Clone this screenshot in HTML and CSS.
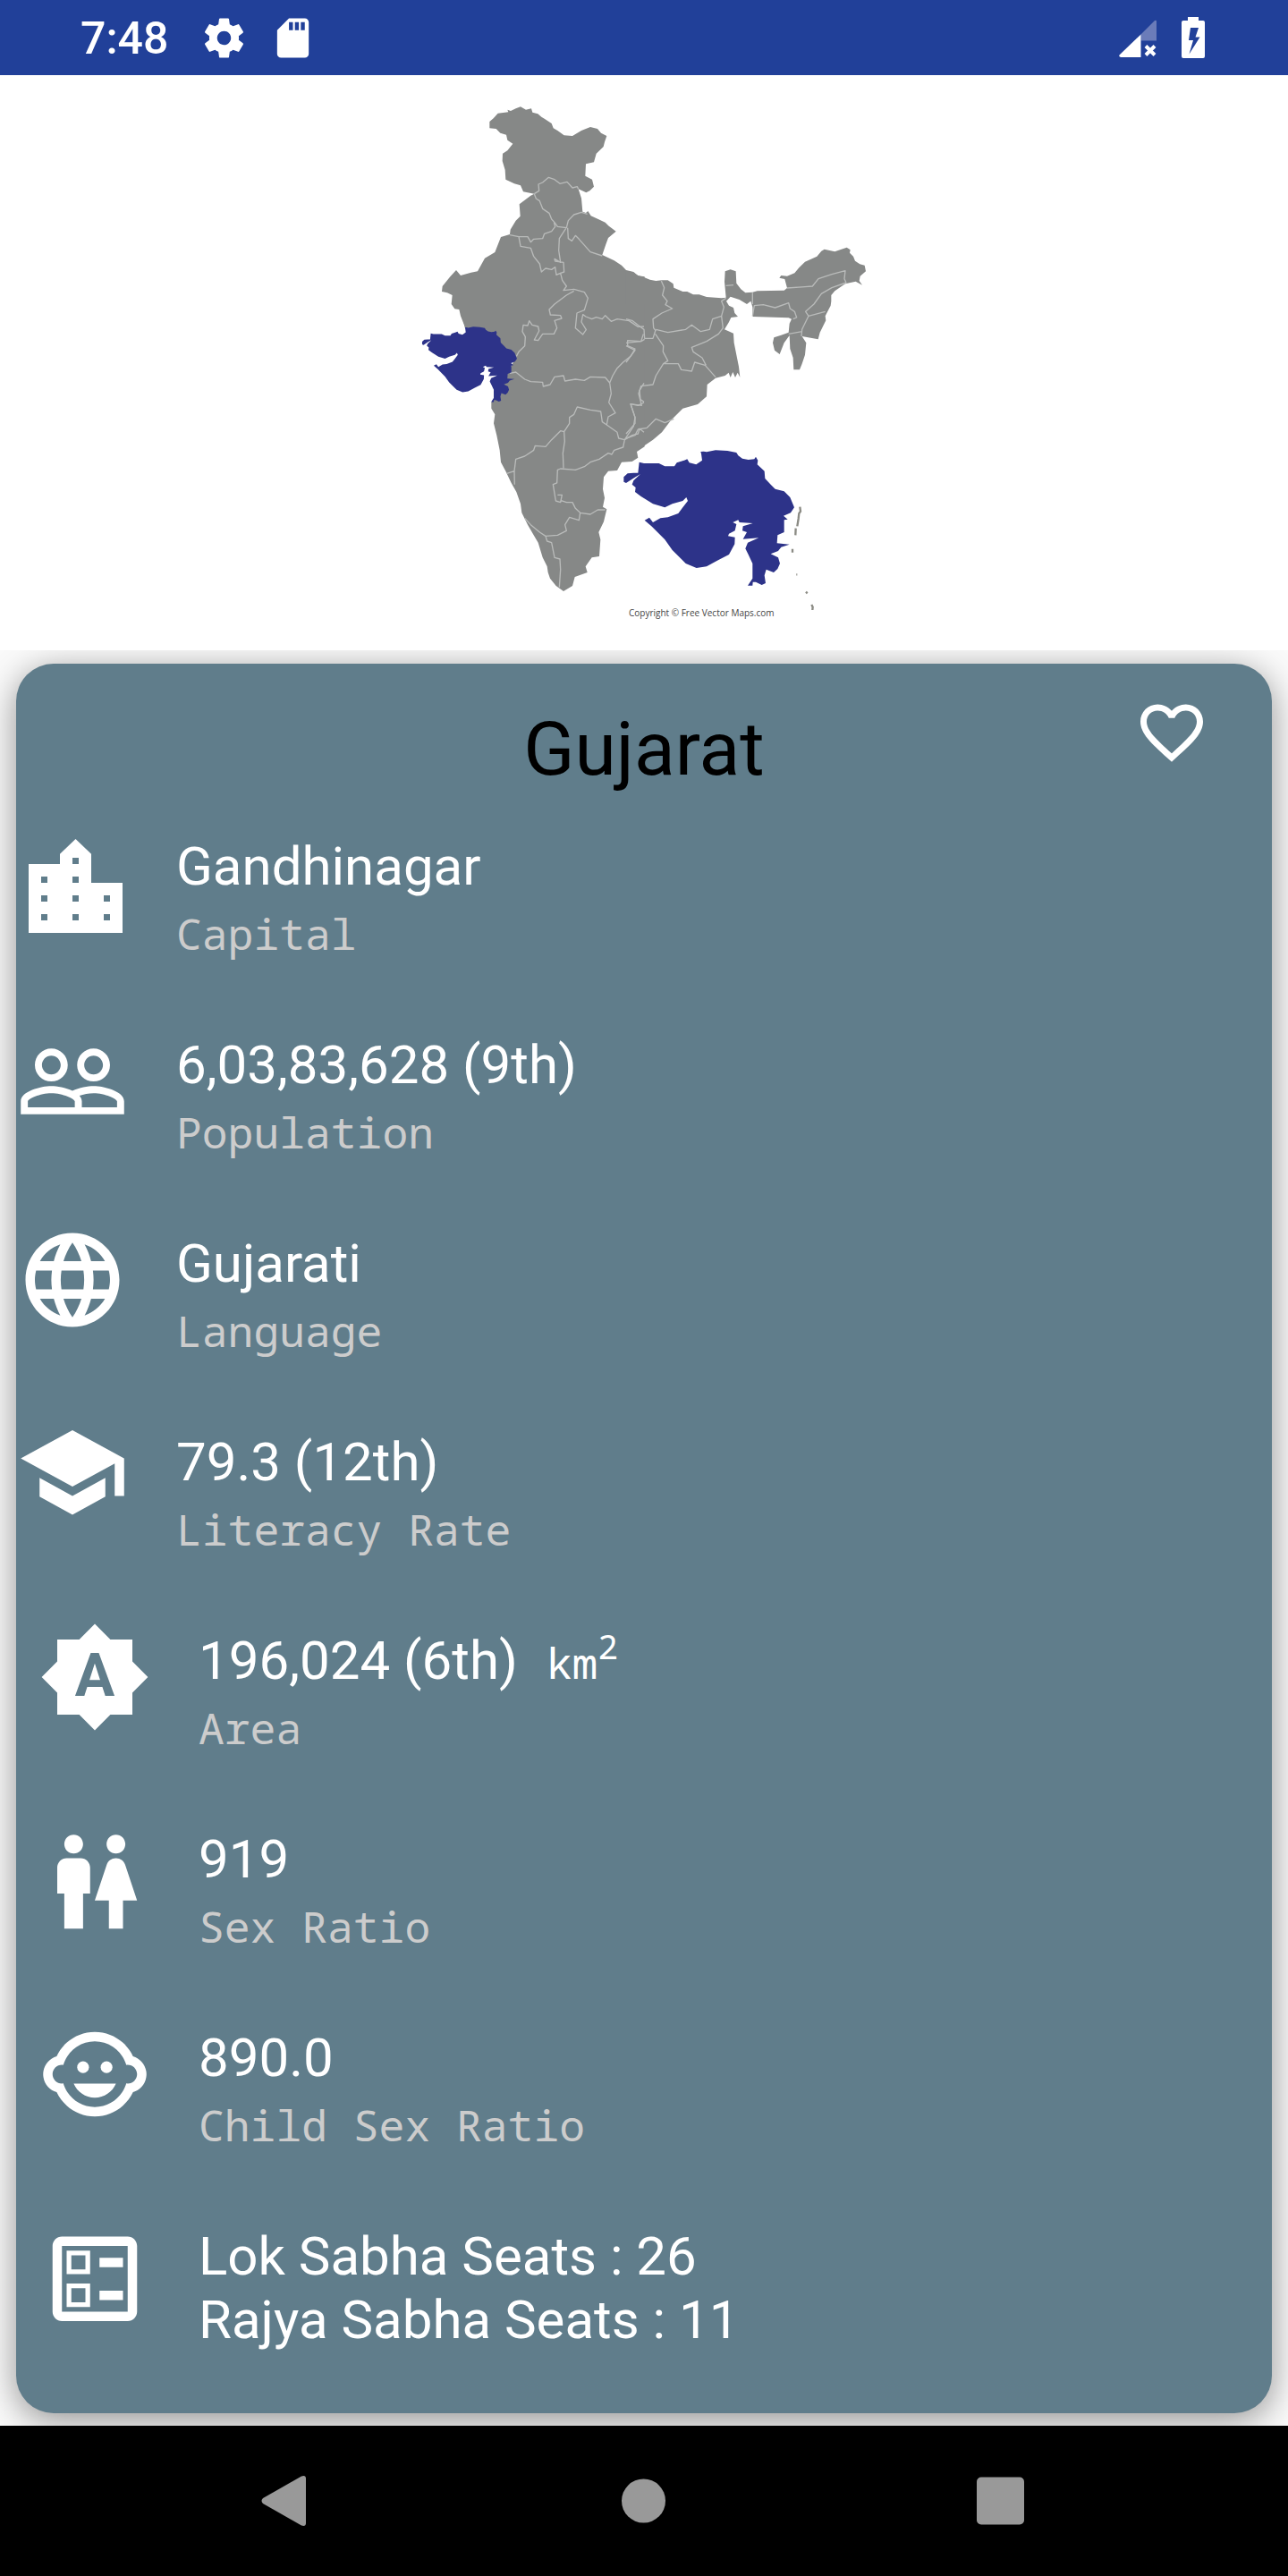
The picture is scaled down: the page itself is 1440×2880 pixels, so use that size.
FILE: index.html
```html
<!DOCTYPE html>
<html lang="en">
<head>
<meta charset="utf-8">
<meta name="viewport" content="width=device-width, initial-scale=1">
<title>Gujarat</title>
<link rel="stylesheet" href="styles.css">
</head>
<body>
<header class="status">
  <div class="status-group">
    <span class="clock">7:48</span>
    <svg class="status-icon" viewBox="0 0 24 24" aria-hidden="true"><path d="M19.43 12.98c.04-.32.07-.64.07-.98s-.03-.66-.07-.98l2.11-1.65c.19-.15.24-.42.12-.64l-2-3.46c-.12-.22-.39-.3-.61-.22l-2.49 1c-.52-.4-1.08-.73-1.69-.98l-.38-2.65C14.46 2.18 14.25 2 14 2h-4c-.25 0-.46.18-.49.42l-.38 2.65c-.61.25-1.17.59-1.69.98l-2.49-1c-.23-.09-.49 0-.61.22l-2 3.46c-.13.22-.07.49.12.64l2.11 1.65c-.04.32-.07.65-.07.98s.03.66.07.98l-2.11 1.65c-.19.15-.24.42-.12.64l2 3.46c.12.22.39.3.61.22l2.49-1c.52.4 1.08.73 1.69.98l.38 2.65c.03.24.24.42.49.42h4c.25 0 .46-.18.49-.42l.38-2.65c.61-.25 1.17-.59 1.69-.98l2.49 1c.23.09.49 0 .61-.22l2-3.46c.12-.22.07-.49-.12-.64l-2.11-1.65zM12 15.5c-1.93 0-3.5-1.57-3.5-3.5s1.57-3.5 3.5-3.5 3.5 1.57 3.5 3.5-1.57 3.5-3.5 3.5z"/></svg>
    <svg class="status-icon" viewBox="0 0 24 24" aria-hidden="true"><path d="M18 2h-8L4.020 8 4 20c0 1.100.900 2 2 2h12c1.100 0 2-.9 2-2V4c0-1.100-.9-2-2-2zm-6 6h-2V4h2v4zm3 0h-2V4h2v4zm3 0h-2V4h2v4z"/></svg>
  </div>
  <div class="status-group status-right">
    <svg class="signal" viewBox="0 0 43 43" aria-hidden="true">
      <path class="signal-off" d="M24.500 17.500L40 2q2-1 2 1v21.500H24.500z"/>
      <path d="M24.500 17.500V43H2q-3-1-1-3z"/>
      <path class="signal-x" d="M30 30.500l10 10M40 30.500l-10 10"/>
    </svg>
    <svg class="battery" viewBox="0 0 26 46" aria-hidden="true"><path fill-rule="evenodd" d="M7 0h12v4h5q2 0 2 2v38q0 2-2 2H2q-2 0-2-2V6q0-2 2-2h5zM10 12L8 26h5L8.500 41.500 20.500 22.500h-5L19 12z"/></svg>
  </div>
</header>

<div class="hero">
  <svg class="map" viewBox="460 84 520 643" role="img" aria-label="Map of India with Gujarat highlighted">
    <defs>
      <path id="gujarat" d="M312 82L310 75 320 74 330 76 360 70 400 72 430 78 436 88 450 98 470 102 490 100 495 92 502 104 500 118 524 140 526 165 545 185 560 200 590 208 610 228 624 262 612 280 588 290 602 302 590 304 590 345 568 355 566 382 608 386 580 395 570 408 545 418 570 430 576 450 568 468 555 480 530 470 524 490 528 516 515 522 495 512 485 512 484 524 468 524 484 500 484 450 470 420 460 400 468 380 505 364 452 368 465 345 450 340 452 325 485 315 440 312 436 304 418 312 430 318 425 340 405 350 402 358 425 362 424 385 405 420 370 438 330 460 296 465 260 450 215 405 190 370 145 325 122 305 138 296 150 312 175 298 200 295 235 282 250 262 267 240 262 228 250 240 215 250 190 262 150 250 110 225 90 210 92 195 80 185 85 172 108 150 88 162 60 180 52 176 52 160 65 148 85 146 100 146 104 110 120 114 170 114 190 124 222 124 230 112 255 104 265 100 272 112 295 118 315 104z"/>
    </defs>
    <g transform="translate(460 100) scale(.33333)">
      <g class="land">
        <path d="M262 130L262 108 275 97 290 80 325 76 322 68 333 72 350 64 366 58 384 68 402 64 406 77 424 82 436 92 446 98 470 114 476 130 490 138 512 154 540 156 570 138 600 126 624 132 636 146 655 156 648 176 644 192 620 215 612 244 585 250 583 290 606 302 612 326 598 340 586 346 560 334 570 365 574 410 585 414 592 408 602 424 628 436 650 446 662 458 686 476 660 498 652 520 640 555 680 574 705 590 720 606 745 612 760 625 782 628V902H352L180 798 165 760 160 738 145 736 134 720 137 690 120 682 102 678 104 660 130 628 150 606 165 624 200 614 222 610 246 566 280 546 300 495 330 486 332 470 350 440 365 425 362 385 400 356 412 350 375 343 366 322 345 316 316 302 314 270 305 240 306 215 322 205 340 182 322 170 318 152 298 146 284 132z"/>
        <path transform="translate(720 420)" d="M0 190L20 192 40 204 60 210 80 218 100 222 120 220 140 220 158 232 160 245 190 258 205 258 225 268 245 268 270 276 320 280 335 278 330 225 332 190 350 184 368 190 370 230 385 250 400 262 424 260 440 256 530 254 540 246 532 216 514 212 520 204 540 206 565 196 580 178 600 158 640 140 655 122 665 116 700 124 722 116 740 110 752 118 750 128 762 140 768 155 784 166 800 170 804 190 785 206 782 222 792 236 770 224 735 232 700 256 688 270 688 290 686 305 668 340 670 355 650 395 644 418 590 408 604 430 600 470 590 500 582 520 562 520 560 480 550 450 548 405 530 430 515 468 498 455 492 430 496 412 520 404 545 395 548 365 555 350 545 346 425 342 424 310 418 290 405 300 380 285 350 275 336 290 345 305 360 312 364 330 375 342 352 345 345 360 330 385 360 398 362 430 372 480 378 510 382 545 374 530 366 546 358 528 350 546 344 530 332 540 300 548 272 570 270 610 240 636 190 650 150 690 120 730 90 755 50 782H-2V190z"/>
        <path transform="translate(0 720)" d="M165 20L180 80 350 180 268 330 268 350 280 370 276 400 286 440 296 490 300 530 316 560 335 600 352 630 366 670 370 700 390 740 410 775 425 800 440 850 455 880 458 900 465 920 485 945 510 963 540 945 548 915 590 900 584 880 605 850 630 846 634 790 628 765 645 730 655 688 642 680 648 650 642 620 645 580 660 560 690 558 705 530 740 528 760 515 756 495 782 478V0H165z"/>
      </g>
      <g class="borders">
        <path d="M412 350L428 340 426 318 440 312 460 295 480 302 498 316 522 310 540 330 556 326 560 334M412 350L418 366 430 374 440 400 462 415 470 435 480 446 490 460 520 464 526 440 545 420 570 412 590 418M524 464L526 500 538 508 550 490 562 502 578 520 600 545 640 558M330 488L360 494 390 494 400 512 410 502 440 500 446 484 470 476 482 460 478 446M360 494L366 526 400 532 410 560 430 585 436 612 450 600 470 604 482 596 486 622 500 616M518 466L496 500 494 540 500 580 480 568 482 576 510 580 512 612 500 616 506 640 520 660 510 674 545 670 580 680 592 700 580 740 555 750 550 800 575 822 586 806 570 780 575 755 585 762 605 770 620 764 640 770 650 758 670 778 690 770 730 776 760 796 780 795M545 676L520 690 480 720 462 738 466 756 500 758 504 768 480 775 488 800 478 820 440 820 425 842 412 840 428 810 425 795 405 790 395 776 390 792 375 790 372 812 382 830 380 860 360 880 352 895"/>
        <path transform="translate(720 420)" d="M335 238L360 236M424 262V300M424 340L430 305 460 302 500 312 545 296 550 315 565 325 572 345 560 350M540 246L600 242 625 240 645 215 690 200 735 188 732 215 738 228 690 245 655 265 630 300 602 325 612 340 668 325M612 340L590 385 588 408M545 400L590 392M118 222L128 245 122 270 138 290 132 302 155 315 120 330 90 350 92 380 100 390M100 385L140 395 200 385 220 370 250 392 280 385 290 350 320 340 328 310 320 290 335 280M0 350L20 355 50 378 60 385 62 415 90 415 98 390M0 430L50 425 62 418M98 400L125 440 124 460 140 490 125 500 175 500 185 520 220 525 230 495 265 505 300 545M320 340L325 380 310 400 270 425 220 445 225 460 255 480 268 505M125 500L100 540 90 570 50 575 42 600 52 640 15 635 30 680 30 700 0 735M160 685L130 698 100 685 70 715 40 720 30 740 0 750M0 440L30 455 0 495"/>
        <path transform="translate(0 720)" d="M330 232L350 228 380 252 400 260 440 262 442 276 465 270 480 244 510 240 515 258 550 252 580 256 600 244 650 246 665 264 675 240 690 215 710 195 735 175 750 150 725 140 725 122 770 125 778 100M665 264L670 300 662 330 684 365 660 378 655 405M512 428L530 400 530 380 545 370 556 345 600 355 635 360 640 395 655 405 690 430 695 450 715 455 745 410 750 380 735 335 760 340 780 330M780 265L765 290 768 320 780 328M780 430L765 418 760 435 740 440 715 455 710 480 680 490 672 504 660 500 630 520 600 530 580 545 550 556 500 552 490 556 488 600 475 605 484 660 500 665 505 640 490 640M500 658L520 665 540 665 550 685 566 700 600 705 625 690 650 690M320 568L345 560 350 520 380 510 410 490 415 475 450 478 470 455 500 425 512 428 514 460 508 500 510 550M345 560L346 605M566 700L562 725 530 715 515 740 520 760 490 775 450 778 430 765 400 740 380 718M450 778L455 795 470 800 480 850 498 855 500 890 496 950"/>
      </g>
      <use class="state" href="#gujarat" transform="translate(7 757) scale(.556)"/>
      <g transform="translate(660 1140)">
        <use class="state" href="#gujarat"/>
        <path class="islands" d="M643 260L645 275 640 282 638 300 634 325M629 332L628 355M618 401V413M631 487H634M663 550L668 545M682 588L686 596 685 606"/>
      </g>
    </g>
    <text class="credit" x="703" y="689">Copyright © Free Vector Maps.com</text>
  </svg>
</div>

<main class="content">
  <article class="card">
    <div class="card-head">
      <h1 class="title">Gujarat</h1>
      <button class="favourite" type="button" aria-label="Add to favourites">
        <svg viewBox="0 0 24 24" aria-hidden="true"><path d="M16.500 3c-1.740 0-3.410.810-4.500 2.090C10.910 3.810 9.240 3 7.500 3 4.420 3 2 5.420 2 8.500c0 3.780 3.400 6.860 8.550 11.540L12 21.350l1.450-1.320C18.600 15.360 22 12.280 22 8.500 22 5.420 19.580 3 16.500 3zm-4.400 15.550l-.1.100-.1-.1C7.140 14.240 4 11.390 4 8.500 4 6.500 5.500 5 7.500 5c1.540 0 3.040.990 3.570 2.360h1.870C13.460 5.990 14.960 5 16.500 5c2 0 3.500 1.500 3.500 3.500 0 2.890-3.140 5.740-7.900 10.050z"/></svg>
      </button>
    </div>
    <ul class="facts">
      <li class="fact">
        <svg class="fact-icon" viewBox="-2 -2 18 18" aria-hidden="true"><path fill-rule="evenodd" d="M0 4h5V2.400L7.500 0 10 2.400V7h5v8H0zM7 3h1v1H7zM2 6h1v1H2zM7 6h1v1H7zM2 9h1v1H2zM7 9h1v1H7zM12 9h1v1h-1zM2 12h1v1H2zM7 12h1v1H7zM12 12h1v1h-1z"/></svg>
        <div class="fact-text"><p class="value">Gandhinagar</p><p class="label">Capital</p></div>
      </li>
      <li class="fact">
        <svg class="fact-icon" viewBox="0 0 24 24" aria-hidden="true"><path d="M16.500 13c-1.200 0-3.070.340-4.500 1-1.430-.67-3.300-1-4.500-1C5.330 13 1 14.080 1 16.250V19h22v-2.750c0-2.170-4.330-3.250-6.500-3.250zm-4 4.500h-10v-1.250c0-.54 2.560-1.750 5-1.750s5 1.210 5 1.750v1.250zm9 0H14v-1.250c0-.46-.2-.86-.52-1.220.88-.3 1.960-.53 3.020-.53 2.440 0 5 1.210 5 1.750v1.250zM7.500 12c1.930 0 3.500-1.570 3.500-3.500S9.430 5 7.500 5 4 6.570 4 8.500 5.570 12 7.500 12zm0-5.500c1.100 0 2 .900 2 2s-.9 2-2 2-2-.9-2-2 .9-2 2-2zm9 5.500c1.930 0 3.500-1.570 3.500-3.500S18.430 5 16.500 5 13 6.570 13 8.500s1.570 3.500 3.500 3.500zm0-5.500c1.100 0 2 .900 2 2s-.9 2-2 2-2-.9-2-2 .9-2 2-2z"/></svg>
        <div class="fact-text"><p class="value">6,03,83,628 (9th)</p><p class="label">Population</p></div>
      </li>
      <li class="fact">
        <svg class="fact-icon" viewBox="0 0 24 24" aria-hidden="true"><path d="M11.990 2C6.470 2 2 6.480 2 12s4.470 10 9.990 10C17.520 22 22 17.520 22 12S17.520 2 11.990 2zm6.930 6h-2.950c-.32-1.250-.78-2.450-1.380-3.560 1.840.630 3.370 1.910 4.330 3.560zM12 4.040c.830 1.200 1.480 2.530 1.910 3.960h-3.820c.430-1.430 1.080-2.760 1.910-3.960zM4.260 14C4.100 13.360 4 12.690 4 12s.1-1.360.260-2h3.380c-.08.660-.14 1.320-.14 2 0 .680.060 1.340.140 2H4.260zm.820 2h2.950c.320 1.250.780 2.450 1.380 3.560-1.840-.63-3.370-1.900-4.330-3.560zm2.950-8H5.080c.960-1.660 2.490-2.930 4.330-3.560C8.810 5.550 8.350 6.750 8.030 8zM12 19.960c-.83-1.200-1.480-2.530-1.910-3.960h3.820c-.43 1.430-1.080 2.760-1.910 3.960zM14.340 14H9.660c-.09-.66-.16-1.320-.16-2 0-.68.070-1.350.160-2h4.680c.090.650.160 1.320.160 2 0 .680-.07 1.340-.16 2zm.250 5.560c.600-1.110 1.060-2.310 1.380-3.560h2.950c-.96 1.650-2.490 2.930-4.330 3.560zM16.360 14c.080-.66.140-1.320.140-2 0-.68-.06-1.340-.14-2h3.380c.160.640.260 1.310.260 2s-.1 1.360-.26 2h-3.380z"/></svg>
        <div class="fact-text"><p class="value">Gujarati</p><p class="label">Language</p></div>
      </li>
      <li class="fact">
        <svg class="fact-icon" viewBox="0 1.300 24 24" aria-hidden="true"><path d="M5 13.180v4L12 21l7-3.820v-4L12 17l-7-3.820zM12 3L1 9l11 6 9-4.910V17h2V9L12 3z"/></svg>
        <div class="fact-text"><p class="value">79.3 (12th)</p><p class="label">Literacy Rate</p></div>
      </li>
      <li class="fact fact-inset">
        <svg class="fact-icon" viewBox="0 0 24 24" aria-hidden="true"><path d="M20 8.690V4h-4.690L12 .690 8.690 4H4v4.690L.690 12 4 15.310V20h4.690L12 23.310 15.310 20H20v-4.690L23.310 12z"/><text class="badge-letter" x="12" y="16">A</text></svg>
        <div class="fact-text"><p class="value">196,024 (6th) <span class="unit">km<sup>2</sup></span></p><p class="label">Area</p></div>
      </li>
      <li class="fact fact-inset">
        <svg class="fact-icon" viewBox="0 -1.300 24 24" aria-hidden="true"><path d="M5.500 22v-7.500H4V9c0-1.100.900-2 2-2h3c1.100 0 2 .900 2 2v5.500H9.500V22h-4zM18 22v-6h3l-2.540-7.630C18.180 7.550 17.420 7 16.560 7h-.12c-.86 0-1.630.550-1.900 1.370L12 16h3v6h3zM7.500 6c1.110 0 2-.89 2-2s-.89-2-2-2-2 .890-2 2 .890 2 2 2zm9 0c1.110 0 2-.89 2-2s-.89-2-2-2-2 .890-2 2 .890 2 2 2z"/></svg>
        <div class="fact-text"><p class="value">919</p><p class="label">Sex Ratio</p></div>
      </li>
      <li class="fact fact-inset">
        <svg class="fact-icon" viewBox="0 0 24 24" aria-hidden="true"><circle cx="14.500" cy="10.500" r="1.250"/><circle cx="9.500" cy="10.500" r="1.250"/><path d="M22.940 12.660c.040-.21.060-.43.060-.66s-.02-.45-.06-.66c-.25-1.510-1.360-2.740-2.810-3.170-.53-1.120-1.280-2.100-2.190-2.910C16.360 3.850 14.280 3 12 3s-4.360.850-5.940 2.260c-.92.810-1.670 1.800-2.190 2.910-1.450.430-2.560 1.650-2.810 3.170-.04.210-.06.430-.06.660s.020.450.060.660c.250 1.510 1.360 2.740 2.810 3.170.520 1.110 1.270 2.090 2.170 2.890C7.620 20.140 9.710 21 12 21s4.380-.86 5.970-2.280c.900-.8 1.650-1.790 2.170-2.890 1.440-.43 2.550-1.650 2.800-3.170zM19 14c-.1 0-.19-.02-.29-.03-.2.670-.49 1.290-.86 1.860C16.600 17.740 14.450 19 12 19s-4.600-1.260-5.850-3.170c-.37-.57-.66-1.190-.86-1.860-.1.010-.19.030-.29.030-1.100 0-2-.9-2-2s.9-2 2-2c.100 0 .190.020.290.030.200-.67.490-1.290.860-1.860C7.400 6.260 9.550 5 12 5s4.600 1.260 5.850 3.170c.370.570.660 1.190.860 1.860.100-.01.190-.03.290-.03 1.100 0 2 .900 2 2s-.9 2-2 2zM7.500 14c.760 1.770 2.490 3 4.500 3s3.740-1.230 4.500-3h-9z"/></svg>
        <div class="fact-text"><p class="value">890.0</p><p class="label">Child Sex Ratio</p></div>
      </li>
      <li class="fact fact-inset">
        <svg class="fact-icon" viewBox="0 -1.300 24 24" aria-hidden="true"><path d="M13 7.500h5v2h-5zm0 7h5v2h-5zM19 3H5c-1.100 0-2 .900-2 2v14c0 1.100.900 2 2 2h14c1.100 0 2-.9 2-2V5c0-1.100-.9-2-2-2zm0 16H5V5h14v14zM11 6H6v5h5V6zm-1 4H7V7h3v3zm1 3H6v5h5v-5zm-1 4H7v-3h3v3z"/></svg>
        <div class="fact-text"><p class="value">Lok Sabha Seats : 26</p><p class="value">Rajya Sabha Seats : 11</p></div>
      </li>
    </ul>
  </article>
</main>

<nav class="navbar" aria-label="System navigation">
  <button class="nav-button" type="button" aria-label="Back"><svg viewBox="0 0 60 60" aria-hidden="true"><path d="M6 27L49 2.500Q54 1 54 5V55Q54 59 49 57.500L6 33Q3 30 6 27z"/></svg></button>
  <button class="nav-button" type="button" aria-label="Home"><svg viewBox="0 0 60 60" aria-hidden="true"><circle cx="29.500" cy="30" r="24.500"/></svg></button>
  <button class="nav-button" type="button" aria-label="Recent apps"><svg viewBox="0 0 60 60" aria-hidden="true"><rect x="0" y="3.500" width="53" height="53" rx="5"/></svg></button>
</nav>
</body>
</html>
```
FILE: styles.css
```css
* {
  box-sizing: border-box;
}

body {
  margin: 0;
  min-height: 100vh;
  display: flex;
  flex-direction: column;
  background: #fafafa;
  font-family: Roboto, "Liberation Sans", sans-serif;
}

h1,
p,
ul {
  margin: 0;
  padding: 0;
  font-weight: 400;
}

button {
  padding: 0;
  border: 0;
  background: none;
}

svg {
  display: block;
}

/* Status bar */
.status {
  display: flex;
  justify-content: space-between;
  height: 84px;
  padding: 0 93px 0 90px;
  background: #214099;
  color: #fff;
  fill: #fff;
}

.status-group {
  display: flex;
  align-items: center;
  gap: 24px;
}

.status-right {
  gap: 27px;
}

.clock {
  margin-right: 12px;
  padding-top: 2px;
  font-size: 50px;
  font-weight: 500;
  line-height: 60px;
}

.status-icon {
  width: 53px;
  height: 53px;
}

.signal {
  width: 43px;
  height: 43px;
}

.signal-off {
  fill: #6b7cb9;
}

.signal-x {
  stroke: #fff;
  stroke-width: 4;
}

.battery {
  width: 26px;
  height: 46px;
}

/* Map */
.hero {
  display: flex;
  justify-content: center;
  background: #fff;
}

.map {
  width: 520px;
  height: 643px;
}

.land {
  fill: #868887;
}

.borders {
  fill: none;
  stroke: #b9bbba;
  stroke-width: 4;
  stroke-linejoin: round;
}

.state {
  fill: #2d3389;
}

.islands {
  fill: none;
  stroke: #8b8b84;
  stroke-width: 7;
}

.credit {
  fill: #444;
  font-family: "Open Sans", sans-serif;
  font-size: 10px;
}

/* Card */
.content {
  flex: 1;
  display: flex;
  padding: 15px 18px 14px;
  overflow: hidden;
}

.card {
  flex: 1;
  padding-bottom: 69px;
  border-radius: 42px;
  background: #607d8b;
  box-shadow: 0 8px 38px rgba(0, 0, 0, 0.42);
}

.card-head {
  display: grid;
  grid-template-columns: 1fr auto 1fr;
  align-items: start;
  padding: 35px 70px 0;
}

.title {
  grid-column: 2;
  padding-top: 12px;
  color: #000;
  font-size: 84px;
  line-height: 98px;
}

.favourite {
  justify-self: end;
  width: 84px;
  height: 84px;
  fill: #fff;
}

.facts {
  display: grid;
  gap: 80px;
  padding-top: 46px;
  list-style: none;
}

.fact {
  display: flex;
  gap: 53px;
  height: 142px;
}

.fact-inset {
  padding-left: 25px;
}

.fact-icon {
  flex: none;
  width: 126px;
  height: 126px;
  margin-top: -9px;
  fill: #fff;
}

.badge-letter {
  fill: #607d8b;
  font-size: 12.6px;
  font-weight: 700;
  text-anchor: middle;
}

.value {
  color: #fff;
  font-size: 60px;
  line-height: 71px;
}

.label,
.unit {
  font-family: "Droid Sans Mono", "Noto Sans Mono", "DejaVu Sans Mono", monospace;
  font-size: 48px;
}

.label {
  margin-top: 12px;
  color: #ccc;
  line-height: 56px;
}

.unit {
  margin-left: 17px;
  line-height: 1;
}

.unit sup {
  position: relative;
  top: -22px;
  font-size: 38px;
  line-height: 0;
  vertical-align: baseline;
}

/* System navigation */
.navbar {
  display: flex;
  align-items: center;
  justify-content: space-between;
  height: 168px;
  padding: 0 20%;
  background: #000;
}

.nav-button {
  width: 60px;
  height: 60px;
  fill: #999;
}
```
